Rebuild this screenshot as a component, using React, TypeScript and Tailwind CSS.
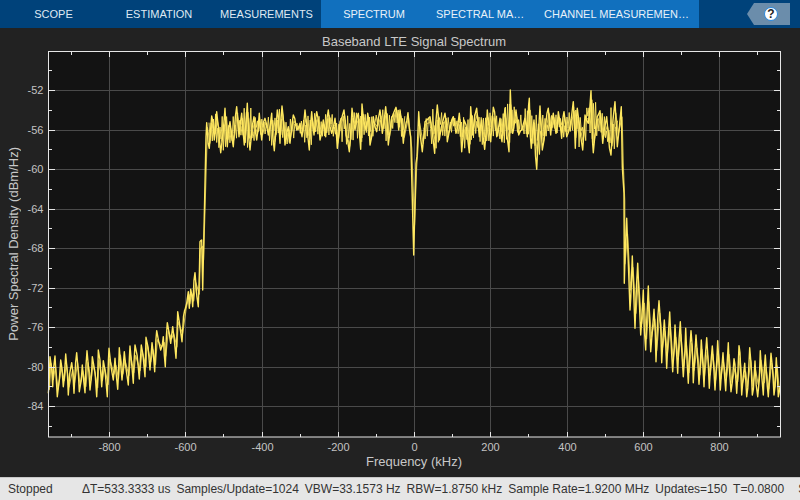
const tabs = [
  { label: "SCOPE", cls: "w-[107px] px-[5px]", active: false },
  { label: "ESTIMATION", cls: "w-[107px] pl-[5px] pr-[8px]", active: false },
  { label: "MEASUREMENTS", cls: "w-[107px] pl-[4px] pr-[6px]", active: false },
  { label: "SPECTRUM", cls: "w-[106px] px-[5px]", active: true },
  { label: "SPECTRAL MASK", cls: "w-[107px] pl-[9px] pr-[8px]", active: true },
  { label: "CHANNEL MEASUREMENTS", cls: "w-[165px] pl-[10px] pr-[8px]", active: true },
];

const stats = [
  "ΔT=533.3333 us",
  "Samples/Update=1024",
  "VBW=33.1573 Hz",
  "RBW=1.8750 kHz",
  "Sample Rate=1.9200 MHz",
  "Updates=150",
  "T=0.0800",
  "S",
];

const gridX: [number, string][] = [
  [109.5, "-800"], [185.5, "-600"], [262.5, "-400"], [338.5, "-200"], [414.5, "0"],
  [490.5, "200"], [567.5, "400"], [643.5, "600"], [719.5, "800"],
];
const gridY: [number, string][] = [
  [90.5, "-52"], [130.5, "-56"], [169.5, "-60"], [209.5, "-64"], [248.5, "-68"],
  [288.5, "-72"], [327.5, "-76"], [367.5, "-80"], [406.5, "-84"],
];
const minorX = [71.5, 147.5, 223.5, 300.5, 376.5, 452.5, 528.5, 605.5, 681.5, 757.5];
const minorY = [70.5, 110.5, 149.5, 189.5, 228.5, 268.5, 307.5, 347.5, 386.5, 426.5];

type P = [number, number];
const map = (ox: number, oy: number, pts: number[]) => {
  const out: P[] = [];
  for (let i = 0; i < pts.length; i += 2) out.push([ox + pts[i] / 3, oy + pts[i + 1] / 3]);
  return out;
};

const leftTail = map(40, 280, [
  25,340, 30,230, 38,320, 45,228, 52,350, 62,240, 70,320, 77,222, 85,345, 95,248, 102,340, 110,218,
  118,335, 127,255, 135,338, 141,212, 150,330, 157,230, 170,350, 175,210, 185,320, 190,242, 202,350,
  207,205, 220,300, 225,235, 233,328, 238,203, 246,300, 253,215, 265,315, 270,198, 280,310, 285,195,
  298,297, 304,195, 315,290, 318,172, 330,270, 336,188, 344,275, 350,152, 362,210, 370,170, 376,260,
  382,128, 392,190, 398,140, 408,235, 413,95, 426,185, 434,90,
]);
const leftEdge = map(170, 130, [
  45,540, 50,520, 55,485, 58,535, 62,478, 68,530, 75,428, 85,530, 90,335, 95,330, 98,480, 108,20,
]);
const plateauA = map(190, 80, [
  50,128, 58,205, 65,108, 73,180, 80,95, 92,218, 105,85, 112,200, 120,125, 130,200, 140,80, 147,170,
  155,100, 163,195, 172,70, 180,210, 192,110, 200,180, 208,100, 215,180, 225,115, 235,165, 245,100,
  253,212, 262,90, 270,190, 276,78, 285,195, 295,140, 300,190, 310,105, 320,150, 330,130, 336,170,
  345,90, 358,210, 365,95, 372,165, 380,95, 390,180, 400,120, 407,170, 415,90, 425,160, 435,115,
  442,205, 450,125, 462,90, 468,165, 478,215, 486,85, 495,150, 505,100, 512,208, 516,72, 528,150,
  533,100, 540,195, 550,110, 560,155, 570,90, 577,160, 587,80, 595,195, 605,115,
]);
const plateauB = map(390, 80, [
  18,82, 26,150, 30,90, 40,190, 48,130, 54,98, 62,170, 71,525, 78,250, 86,95, 97,215, 105,125, 120,110,
  134,220, 142,75, 148,180, 165,100, 172,185, 185,120, 190,110, 198,160, 208,100, 215,215, 222,120,
  238,218, 242,80, 248,165, 260,85, 268,170, 275,120, 284,208, 292,90, 302,185, 310,82, 320,170,
  330,115, 336,185, 345,85, 357,215, 361,30, 368,160, 378,90, 386,165, 395,150, 405,115, 412,170,
  418,55, 424,205, 432,120, 440,268, 450,78, 457,210, 465,150, 475,85, 482,165, 490,100, 498,160,
  505,95, 515,175, 522,95, 530,170, 540,140, 550,65, 556,205, 562,85, 578,210, 585,105, 595,130,
  603,32, 610,218, 622,110, 630,92, 638,190, 650,110, 663,225, 675,65, 682,200, 694,80, 697,260, 702,340,
]);
const rightTail = map(600, 200, [
  73,250, 80,55, 90,330, 97,168, 105,385, 113,190, 122,405, 130,270, 137,450, 145,258, 152,455, 162,328,
  168,485, 177,302, 185,488, 193,360, 200,505, 209,336, 218,515, 225,375, 233,520, 241,365, 250,530,
  257,385, 265,550, 273,392, 280,548, 288,405, 297,553, 304,420, 312,560, 320,413, 328,565, 337,438,
  345,570, 353,422, 361,570, 369,458, 377,572, 385,428, 393,575, 402,476, 410,580, 417,437, 425,585,
  434,490, 440,590, 449,443, 457,585, 465,483, 473,590, 481,452, 490,585, 496,465, 505,590, 513,460,
  522,585, 529,473, 535,590, 540,560,
]);

const base = [...leftTail, ...leftEdge, ...plateauA, ...plateauB, ...rightTail];

// Deterministic noise: adds the fine ripple between the traced peaks.
let seed = 12345;
const rnd = () => {
  seed = (seed * 16807) % 2147483647;
  return seed / 2147483647;
};
const clampX = (x: number) => Math.min(780, Math.max(49, x));

const dense: P[] = [];
base.forEach(([x, y], i) => {
  dense.push([x, y]);
  const next = base[i + 1];
  if (!next) return;
  const dy = next[1] - y;
  const steep = Math.abs(next[0] - x) < 1.6 || Math.abs(dy) > 70;
  if (!steep) {
    const t = 0.35 + rnd() * 0.3;
    dense.push([x + (next[0] - x) * t, y + dy * t + (rnd() - 0.5) * Math.abs(dy) * 0.5]);
  }
});

// Second pass: stays inside the envelope of the traced peaks.
const echo: P[] = base.map(([x, y], i) => {
  const prev = base[i - 1] ?? [x, y];
  const next = base[i + 1] ?? [x, y];
  const pull = 0.18 + rnd() * 0.12;
  const mean = (prev[1] + next[1]) / 2;
  const shift = 0.4 + rnd() * 0.7;
  return [clampX(x + shift), y + (mean - y) * pull];
});

// Third pass: fine ripple that thickens the body of the plateau around its local mean.
const ripple = (from: number, to: number) => {
  const out: P[] = [];
  let up = false;
  for (let x = from; x <= to; x += 1.1) {
    const near = base.filter((p) => Math.abs(p[0] - x) < 5);
    if (near.length === 0) continue;
    const mean = near.reduce((s, p) => s + p[1], 0) / near.length;
    const spread = Math.max(...near.map((p) => p[1])) - Math.min(...near.map((p) => p[1]));
    up = !up;
    const amp = spread * (0.12 + rnd() * 0.22);
    out.push([x, mean + (up ? -amp : amp)]);
  }
  return out;
};
const toPts = (p: P[]) => p.map(([x, y]) => `${x.toFixed(1)},${y.toFixed(1)}`).join(" ");
const trace = toPts(dense);
const echoTrace = toPts(echo);
const ripples = [ripple(209, 405), ripple(424, 618)].map(toPts);

export default function App() {
  return (
    <div className="w-[800px] h-[500px] flex flex-col overflow-hidden bg-[#222222] font-['Liberation_Sans',Arial,sans-serif]">
      <header className="h-[28px] flex bg-[#00427a] text-[11px] leading-[28px] text-[#dfe9f3]">
        {tabs.map((t) => (
          <div
            key={t.label}
            className={`${t.cls} text-center truncate ${t.active ? "bg-[#1170be] text-[#e8f1f9]" : ""}`}
          >
            {t.label}
          </div>
        ))}
        <div className="flex-1 flex justify-end items-start pt-[3px] pr-[10px]">
          <svg width="43" height="22" viewBox="0 0 43 22">
            <polygon points="7,0 43,0 43,22 7,22 0,11" fill="#6b8dab" />
            <circle cx="24" cy="11" r="6.5" fill="#ffffff" stroke="#2a8ae0" strokeWidth="1" />
            <text x="24" y="15" textAnchor="middle" fontSize="12" fontWeight="700" fill="#222222">?</text>
          </svg>
        </div>
      </header>

      <main className="flex-1 flex min-h-0">
        <div className="w-[20px] shrink-0 flex items-center justify-center pb-[17px] pl-[7px]">
          <div className="[writing-mode:vertical-rl] rotate-180 whitespace-nowrap text-[13px] leading-[14px] text-[#c8c8c8]">
            Power Spectral Density (dBm/Hz)
          </div>
        </div>
        <div className="flex-1 flex flex-col min-w-0">
          <div className="h-[23px] ml-[28px] mr-[20px] text-center text-[13px] leading-[27px] text-[#c8c8c8]">
            Baseband LTE Signal Spectrum
          </div>
          <svg width="780" height="403" viewBox="20 51 780 403" className="block shrink-0">
            <rect x="48.5" y="51.5" width="732" height="385.5" fill="#131313" />
            {gridX.map(([x]) => (
              <line key={x} x1={x} x2={x} y1="52" y2="437" stroke="#4a4a4a" />
            ))}
            {gridY.map(([y]) => (
              <line key={y} x1="48" x2="780" y1={y} y2={y} stroke="#4a4a4a" />
            ))}
            {ripples.map((r, i) => (
              <polyline key={i} points={r} fill="none" stroke="#ffe860" strokeWidth="1" strokeLinejoin="round" opacity="0.9" />
            ))}
            <polyline points={echoTrace} fill="none" stroke="#e3cb52" strokeWidth="1.2" strokeLinejoin="round" opacity="0.85" />
            <polyline points={trace} fill="none" stroke="#ffe860" strokeWidth="1.4" strokeLinejoin="round" />
            <rect x="48.5" y="51.5" width="732" height="385.5" fill="none" stroke="#e6e6e6" />
            {gridX.map(([x]) => (
              <g key={x} stroke="#e6e6e6">
                <line x1={x} x2={x} y1="52" y2="57" />
                <line x1={x} x2={x} y1="432" y2="437" />
              </g>
            ))}
            {gridY.map(([y]) => (
              <g key={y} stroke="#e6e6e6">
                <line x1="49" x2="55" y1={y} y2={y} />
                <line x1="774" x2="780" y1={y} y2={y} />
              </g>
            ))}
            {minorX.map((x) => (
              <g key={x} stroke="#e6e6e6">
                <line x1={x} x2={x} y1="52" y2="55" />
                <line x1={x} x2={x} y1="434" y2="437" />
              </g>
            ))}
            {minorY.map((y) => (
              <g key={y} stroke="#e6e6e6">
                <line x1="49" x2="52" y1={y} y2={y} />
                <line x1="777" x2="780" y1={y} y2={y} />
              </g>
            ))}
            {gridY.map(([y, label]) => (
              <text key={label} x="43.5" y={y + 3.5} textAnchor="end" fontSize="11" fill="#c4c4c4">{label}</text>
            ))}
            {gridX.map(([x, label]) => (
              <text key={label} x={x} y="451" textAnchor="middle" fontSize="11" fill="#c4c4c4">{label}</text>
            ))}
          </svg>
          <div className="ml-[28px] mr-[20px] text-center text-[13px] leading-[15px] text-[#c8c8c8]">
            Frequency (kHz)
          </div>
        </div>
      </main>

      <footer className="h-[23px] border-t border-t-[#c8c8c8] bg-[#e6e6e6] flex items-center overflow-hidden pl-[8px] text-[12px] whitespace-nowrap text-[#333333]">
        <span className="w-[74px] shrink-0">Stopped</span>
        <div className="flex gap-[6px] shrink-0">
          {stats.map((s) => (
            <span key={s} className={s === "S" ? "ml-[8px]" : ""}>{s}</span>
          ))}
        </div>
      </footer>
    </div>
  );
}
